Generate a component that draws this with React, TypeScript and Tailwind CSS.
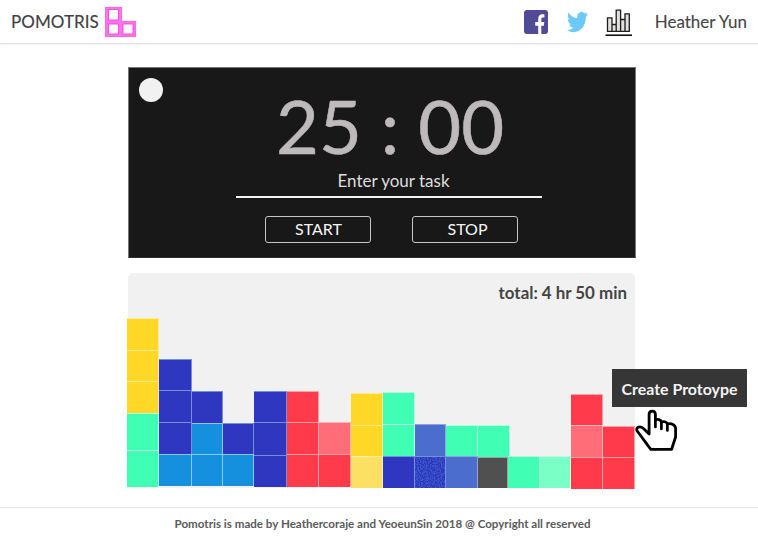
type Block = { h: string; c: string; speckled?: boolean };
type Column = { w: string; blocks: Block[] };

const YELLOW = "bg-[#ffd726] border-[#ffea94]";
const PALE_YELLOW = "bg-[#fce064] border-[#fff0b0]";
const MINT = "bg-[#40ffb5] border-[#b4ffe0]";
const PALE_MINT = "bg-[#7affc6] border-[#c4ffe6]";
const NAVY = "bg-[#2f37c1] border-[#7391d8]";
const STEEL = "bg-[#4b6dcd] border-[#8fa6e2]";
const SKY = "bg-[#1590df] border-[#8cc8f0]";
const RED = "bg-[#ff3b4b] border-[#ffa0a6]";
const PALE_RED = "bg-[#ff6e78] border-[#ffb6ba]";
const GREY = "bg-[#505050] border-[#a0a0a0]";

const columns: Column[] = [
  { w: "w-[32px] mb-[2px]", blocks: [{ h: "h-[32px]", c: YELLOW }, { h: "h-[31px]", c: YELLOW }, { h: "h-[32px]", c: YELLOW }, { h: "h-[37px]", c: MINT }, { h: "h-[37px]", c: MINT }] },
  { w: "w-[33px] mb-[3px]", blocks: [{ h: "h-[31px]", c: NAVY }, { h: "h-[32px]", c: NAVY }, { h: "h-[32px]", c: NAVY }, { h: "h-[32px]", c: SKY }] },
  { w: "w-[31px] mb-[3px]", blocks: [{ h: "h-[32px]", c: NAVY }, { h: "h-[31px]", c: SKY }, { h: "h-[32px]", c: SKY }] },
  { w: "w-[31px] mb-[3px]", blocks: [{ h: "h-[31px]", c: NAVY }, { h: "h-[32px]", c: SKY }] },
  { w: "w-[33px] mb-[2px]", blocks: [{ h: "h-[31px]", c: NAVY }, { h: "h-[33px]", c: NAVY }, { h: "h-[32px]", c: NAVY }] },
  { w: "w-[32px] mb-[2px]", blocks: [{ h: "h-[31px]", c: RED }, { h: "h-[32px]", c: RED }, { h: "h-[33px]", c: RED }] },
  { w: "w-[32px] mb-[2px]", blocks: [{ h: "h-[32px]", c: PALE_RED }, { h: "h-[33px]", c: RED }] },
  { w: "w-[32px] mb-[1px]", blocks: [{ h: "h-[32px]", c: YELLOW }, { h: "h-[31px]", c: YELLOW }, { h: "h-[32px]", c: PALE_YELLOW }] },
  { w: "w-[32px] mb-[1px]", blocks: [{ h: "h-[32px]", c: MINT }, { h: "h-[32px]", c: MINT }, { h: "h-[32px]", c: NAVY }] },
  { w: "w-[31px] mb-[1px]", blocks: [{ h: "h-[32px]", c: STEEL }, { h: "h-[32px]", c: NAVY, speckled: true }] },
  { w: "w-[32px] mb-[1px]", blocks: [{ h: "h-[31px]", c: MINT }, { h: "h-[32px]", c: STEEL }] },
  { w: "w-[30px] mb-[1px]", blocks: [{ h: "h-[32px] w-[32px]", c: MINT }, { h: "h-[31px]", c: GREY }] },
  { w: "w-[32px] mb-[1px]", blocks: [{ h: "h-[32px]", c: MINT }] },
  { w: "w-[31px] mb-[1px]", blocks: [{ h: "h-[32px]", c: PALE_MINT }] },
  { w: "w-[32px]", blocks: [{ h: "h-[31px]", c: RED }, { h: "h-[32px]", c: PALE_RED }, { h: "h-[32px]", c: RED }] },
  { w: "w-[32px]", blocks: [{ h: "h-[31px]", c: RED }, { h: "h-[32px]", c: RED }] },
];

function Speckles() {
  return (
    <svg className="block size-full" viewBox="0 0 31 31" preserveAspectRatio="none">
      <filter id="speckle" x="0" y="0" width="100%" height="100%" colorInterpolationFilters="sRGB">
        <feTurbulence type="fractalNoise" baseFrequency="0.7" numOctaves="2" seed="4" />
        <feColorMatrix values="0 0 0 0 0.22  0 0 0 0 0.34  0 0 0 0 0.78  12 0 0 0 -5.6" />
      </filter>
      <rect width="31" height="31" filter="url(#speckle)" />
    </svg>
  );
}

function Logo() {
  return (
    <svg className="ml-[6px] mt-[1px] h-[30px] w-[31px]" viewBox="0 0 31 30">
      <path d="M0 0H17V14H31V30H0Z" fill="#ff74e8" />
      <path d="M.5 .5H16.5V14.5H30.5V29.5H.5Z" fill="none" stroke="#fd60e6" strokeOpacity=".8" />
      <g fill="#fafafa" stroke="#f943e3" strokeWidth=".9">
        <rect x="3.5" y="2.5" width="10" height="10.5" />
        <rect x="3.5" y="17" width="10" height="10" />
        <rect x="18" y="17" width="10" height="10" />
      </g>
    </svg>
  );
}

function Facebook() {
  return (
    <svg className="size-6" viewBox="0 0 24 24">
      <rect width="24" height="24" rx="3" fill="#504b97" />
      <path fill="#fff" d="M14.2 24v-8.2H11.2v-3.7h3V9.3c0-3.3 1.6-5 4.2-5 .9 0 1.5.1 2 .2v3h-1.5c-1.3 0-1.6.7-1.6 1.7v2.9h3l-.5 3.7h-2.5V24Z" />
    </svg>
  );
}

function Twitter() {
  return (
    <svg className="ml-[19px] h-[22px] w-[21px]" viewBox="0 1.5 24 21" preserveAspectRatio="none">
      <path fill="#6acbfb" d="M23.954 4.569a10 10 0 0 1-2.825.775 4.958 4.958 0 0 0 2.163-2.723c-.951.555-2.005.959-3.127 1.184a4.92 4.92 0 0 0-8.384 4.482C7.691 8.094 4.066 6.13 1.64 3.161a4.822 4.822 0 0 0-.666 2.475c0 1.71.87 3.213 2.188 4.096a4.904 4.904 0 0 1-2.228-.616v.061a4.923 4.923 0 0 0 3.946 4.827 4.996 4.996 0 0 1-2.212.085 4.937 4.937 0 0 0 4.604 3.417 9.868 9.868 0 0 1-6.102 2.105c-.39 0-.779-.023-1.17-.067a13.995 13.995 0 0 0 7.557 2.209c9.054 0 13.999-7.496 13.999-13.986 0-.209 0-.42-.015-.63a9.936 9.936 0 0 0 2.46-2.548Z" />
    </svg>
  );
}

function ChartIcon() {
  return (
    <svg className="ml-[17px] mt-[2px] h-[27px] w-[27px]" viewBox="0 0 27 27">
      <path fill="#e2e0de" stroke="#1c1c1c" strokeWidth="1.3" d="M2.5 22.5V8.8H7V22.5M7 22.5V15.5H11.2V22.5M11.2 22.5V1.2H15.6V22.5M15.6 22.5V10.5H20V22.5M20 22.5V4.8H24.3V22.5M1.9 22.4H24.9" />
      <path stroke="#000" strokeWidth="1.5" d="M.5 26.2H27" />
    </svg>
  );
}

function Hand() {
  return (
    <svg className="absolute left-[635px] top-[409px] h-[43px] w-[43px]" viewBox="0 0 43 43" fill="#fff" stroke="#000" strokeWidth="2.8" strokeLinejoin="round" strokeLinecap="round">
      <path d="M14.1 24V5.6C14.1 .9 20.4 .9 20.4 5.6V11C22 9.9 26 10.4 26.4 13C28.2 12.1 32 12.6 32.4 15C36.2 14 40.6 15.6 40.6 19.5V28L36.6 40.3H15.8L2.2 22C.2 18.3 5 16.6 7.9 19L14.1 25Z" />
      <path fill="none" strokeWidth="2.7" d="M20.4 11V18M26.4 13V20M32.4 15V21.5" />
    </svg>
  );
}

export default function App() {
  return (
    <div className="relative flex h-[540px] w-[758px] flex-col overflow-hidden bg-white font-['Lato',sans-serif] text-[#444]">
      <header className="flex h-[44px] shrink-0 items-center border-b border-[#e0e2e2] bg-white pl-[11px] pr-[11px] shadow-[0_2px_2px_rgba(0,0,0,0.035)]">
        <span className="w-[88px] whitespace-nowrap text-[17px] font-medium text-[#444]">POMOTRIS</span>
        <Logo />
        <div className="ml-auto flex items-center">
          <Facebook />
          <Twitter />
          <ChartIcon />
          <span className="ml-[23px] text-[17px] text-[#444] [-webkit-text-stroke:0.1px_#444]">Heather Yun</span>
        </div>
      </header>

      <main className="flex h-[463px] shrink-0 flex-col pl-[127px] pt-[23px]">
        <section className="ml-[1px] h-[191px] w-[508px] border border-b-[#302e2e] border-l-[#777] border-r-[#777] border-t-[#777] bg-[#181818] pt-[10px]">
          <div className="flex h-[82px] pl-[10px]">
            <div className="size-6 rounded-full bg-[#f1f1f1]" />
            <div className="ml-[113px] flex h-[96px] items-start whitespace-pre text-[74px] leading-[96px] text-[#beb9ba] [-webkit-text-stroke:0.6px_#beb9ba]">25 : 00</div>
          </div>
          <div className="ml-[107px] mt-[8px] flex h-[30px] w-[306px] items-center justify-center border-b-2 border-[#f1f1f1] pb-[3px] pl-[9px] text-[17px] text-[#dedede]">Enter your task</div>
          <div className="ml-[136px] mt-[18px] flex gap-[41px] text-[16px] text-[#f6f6f6]">
            <button className="h-[27px] w-[106px] rounded-[3px] border border-[#c8c4c4] pb-[2px] pl-px">START</button>
            <button className="h-[27px] w-[106px] rounded-[3px] border border-[#c8c4c4] pb-px pl-[5px]">STOP</button>
          </div>
        </section>

        <section className="mt-[15px] flex h-[216px] flex-col">
          <div className="ml-[1px] flex h-[215px] w-[507px] shrink-0 justify-end rounded-t-[5px] bg-[#f1f1f1] pr-[8px] pt-[9px] text-[16.9px] font-bold leading-[22px]">total: 4 hr 50 min</div>
          <div className="-mt-[172px] flex h-[173px] shrink-0 items-end">
            {columns.map((column, i) => (
              <div key={i} className={`shrink-0 ${column.w}`}>
                {column.blocks.map((block, j) => (
                  <div key={j} className={`border-r border-t ${block.h} ${block.c}`}>
                    {block.speckled && <Speckles />}
                  </div>
                ))}
              </div>
            ))}
          </div>
        </section>
      </main>

      <footer className="flex flex-1 items-center justify-center border-t border-[#e2e2e2] pl-[7px] text-[11.6px] font-bold text-[#5a5a5a]">
        Pomotris is made by Heathercoraje and YeoeunSin 2018 @ Copyright all reserved
      </footer>

      <div className="absolute left-[612px] top-[369px] flex h-[38px] w-[135px] items-center justify-center bg-[#363636] pt-px text-[15.9px] font-bold text-[#f4f4f4]">Create Protoype</div>
      <Hand />
    </div>
  );
}
